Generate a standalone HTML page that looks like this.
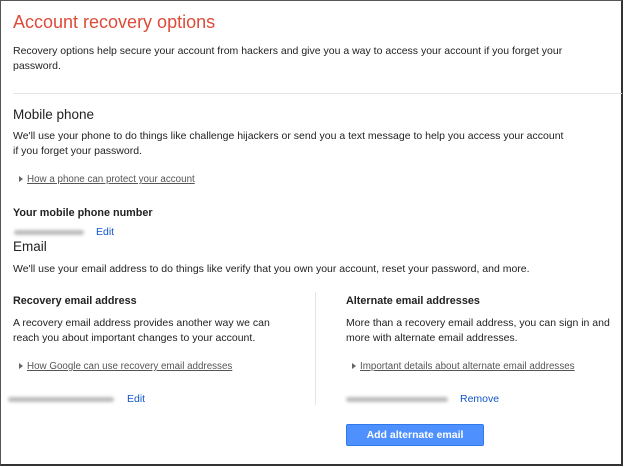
<!DOCTYPE html>
<html><head><style>
body{margin:0;width:624px;height:467px;background:#fff;font-family:"Liberation Sans",Arial,sans-serif;position:relative;overflow:hidden}
.frame{position:absolute;left:0;top:0;width:620px;height:463px;border:1px solid #555;border-right:2px solid #333;border-bottom:2px solid #333}
.a{position:absolute;white-space:nowrap;color:#222;font-size:10.5px;line-height:15px}
.h{font-size:13.5px;line-height:18px;color:#222}
.b{font-weight:bold;font-size:10.8px}
.l{color:#555;text-decoration:underline;font-size:9.8px}
.tri{position:absolute;width:0;height:0;border-left:4px solid #666;border-top:3px solid transparent;border-bottom:3px solid transparent}
.blue{color:#15c;font-size:10.5px}
.blur{position:absolute;height:5px;background:#bbb;border-radius:3px;filter:blur(1.5px)}
</style></head><body>
<div class="frame"></div>
<div class="a" style="left:13px;top:11px;font-size:18px;line-height:22px;color:#dd4b39">Account recovery options</div>
<div class="a" style="left:13px;top:44px">Recovery options help secure your account from hackers and give you a way to access your account if you forget your<br>password.</div>
<div style="position:absolute;left:13px;top:93px;width:609px;height:1px;background:#e5e5e5"></div>
<div class="a h" style="left:13px;top:106px">Mobile phone</div>
<div class="a" style="left:13px;top:129px">We'll use your phone to do things like challenge hijackers or send you a text message to help you access your account<br>if you forget your password.</div>
<div class="tri" style="left:19px;top:176px"></div>
<div class="a l" style="left:27px;top:172px">How a phone can protect your account</div>
<div class="a b" style="left:13px;top:206px">Your mobile phone number</div>
<div class="blur" style="left:14px;top:230px;width:70px"></div>
<div class="a blue" style="left:96px;top:225px">Edit</div>
<div class="a h" style="left:13px;top:238px">Email</div>
<div class="a" style="left:13px;top:262px">We'll use your email address to do things like verify that you own your account, reset your password, and more.</div>
<div style="position:absolute;left:315px;top:292px;width:1px;height:113px;background:#e5e5e5"></div>
<div class="a b" style="left:13px;top:294px">Recovery email address</div>
<div class="a" style="left:13px;top:316px">A recovery email address provides another way we can<br>reach you about important changes to your account.</div>
<div class="tri" style="left:19px;top:363px"></div>
<div class="a l" style="left:27px;top:359px">How Google can use recovery email addresses</div>
<div class="blur" style="left:8px;top:397px;width:106px"></div>
<div class="a blue" style="left:127px;top:392px">Edit</div>
<div class="a b" style="left:346px;top:294px">Alternate email addresses</div>
<div class="a" style="left:346px;top:316px">More than a recovery email address, you can sign in and<br>more with alternate email addresses.</div>
<div class="tri" style="left:352px;top:363px"></div>
<div class="a l" style="left:360px;top:359px">Important details about alternate email addresses</div>
<div class="blur" style="left:346px;top:397px;width:102px"></div>
<div class="a blue" style="left:460px;top:392px">Remove</div>
<div style="position:absolute;left:346px;top:424px;width:138px;height:22px;background:#4d90fe;border:1px solid #3079ed;border-radius:2px;box-sizing:border-box;color:#fff;font-size:10.5px;font-weight:bold;line-height:20px;text-align:center">Add alternate email address</div>
</body></html>
